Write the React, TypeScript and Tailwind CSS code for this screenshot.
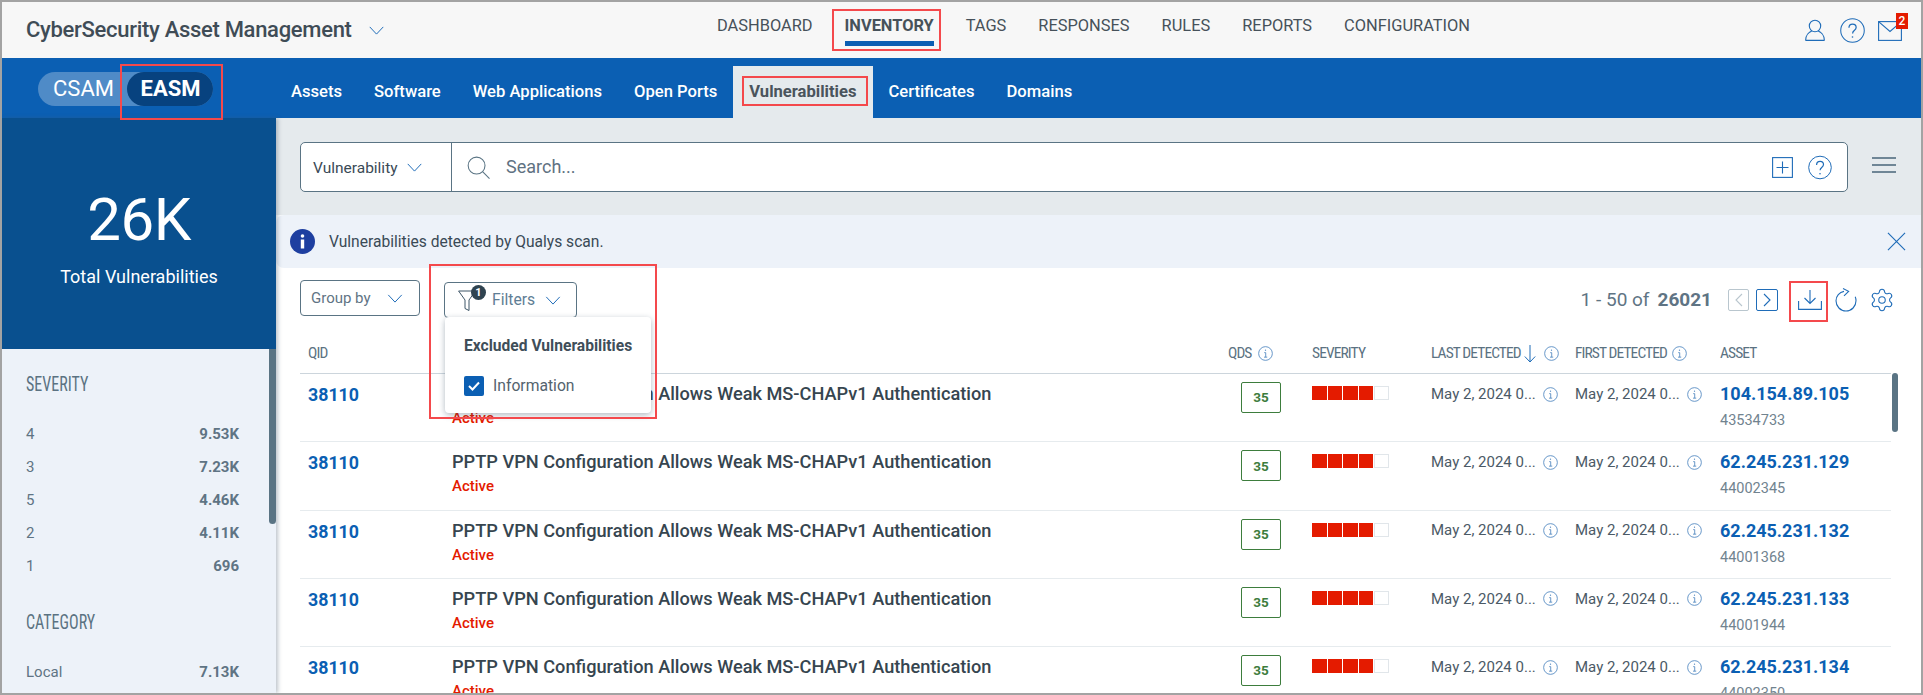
import React from "react";
import { Settings } from "lucide-react";

const BLUE = "#1f6cb8";

function Chevron({ className = "", color = BLUE }: { className?: string; color?: string }) {
  return (
    <svg viewBox="0 0 16 10" className={className} fill="none" stroke={color} strokeWidth="1.1">
      <path d="M0.5 1 L8 9 L15.5 1" />
    </svg>
  );
}

function Help({ className = "" }: { className?: string }) {
  return (
    <svg viewBox="0 0 24 24" className={className} fill="none" stroke={BLUE} strokeWidth="1">
      <circle cx="12" cy="12" r="11.3" />
      <path d="M8.6 9.4c0-2.2 1.6-3.6 3.5-3.6s3.4 1.3 3.4 3.2c0 1.4-.8 2.2-1.8 3-1 .8-1.6 1.4-1.6 2.8" strokeWidth="1.2" />
      <circle cx="12" cy="18.2" r=".8" fill={BLUE} stroke="none" />
    </svg>
  );
}

function Info({ className = "" }: { className?: string }) {
  return (
    <svg viewBox="0 0 14 14" className={className} fill="none" stroke="#4f86c0" strokeWidth=".8">
      <circle cx="7" cy="7" r="6.4" />
      <path d="M5.8 6.2H7.2V10.4M5.6 10.4H8.6" />
      <circle cx="7" cy="3.9" r=".6" fill="#4f86c0" stroke="none" />
    </svg>
  );
}

function Label({ children, className = "" }: { children: React.ReactNode; className?: string }) {
  return <span className={`[font-stretch:75%] font-normal text-[15.5px] tracking-[-0.9px] text-[#5b7282] uppercase whitespace-nowrap ${className}`}>{children}</span>;
}

function SideLabel({ children, className = "" }: { children: React.ReactNode; className?: string }) {
  return <div className={`[font-stretch:75%] text-[20px] leading-[24px] text-[#5b7282] uppercase whitespace-nowrap origin-left scale-x-[.8] ${className}`}>{children}</div>;
}

function Annot({ className }: { className: string }) {
  return <div className={`absolute border-2 border-[#f4494c] pointer-events-none ${className}`} />;
}

function NavItem({ label, active }: { label: string; active?: boolean }) {
  return (
    <div className="relative h-[44px] flex items-center whitespace-nowrap">
      <span className={`text-[16.4px] text-[#46515a] ${active ? "font-bold" : ""}`}>{label}</span>
      {active ? <div className="absolute left-0 right-0 top-[37px] h-[5px] bg-[#0b5fb3]" /> : null}
    </div>
  );
}

function SubTab({ label, active }: { label: string; active?: boolean }) {
  return (
    <div className={`h-[52px] px-4 flex items-center pt-[1px] text-[16.6px] whitespace-nowrap ${active ? "bg-[#e5eaed] text-[#4a545c] font-bold" : "text-white font-medium"}`}>{label}</div>
  );
}

function SideRow({ k, v }: { k: string; v: string }) {
  return (
    <div className="h-[33px] flex items-center justify-between text-[15px] text-[#5f7484]">
      <span>{k}</span>
      <span className="font-bold">{v}</span>
    </div>
  );
}

function SevBars() {
  return (
    <div className="flex gap-[1px] mt-[12px]">
      <div className="w-[14.5px] h-[14px] bg-[#e41b00]" />
      <div className="w-[14.5px] h-[14px] bg-[#e41b00]" />
      <div className="w-[14.5px] h-[14px] bg-[#e41b00]" />
      <div className="w-[14.5px] h-[14px] bg-[#e41b00]" />
      <div className="w-[14.5px] h-[14px] border border-[#e1e6ea] bg-white" />
    </div>
  );
}

function DateCell() {
  return (
    <div className="flex items-center gap-[7px] mt-[10px] h-[20px] text-[15px] text-[#4b5a66] whitespace-nowrap">
      <span>May 2, 2024 0...</span>
      <Info className="w-[15px] h-[15px] shrink-0" />
    </div>
  );
}

function Row({ ip, id }: { ip: string; id: string }) {
  return (
    <div className="h-[68.25px] flex border-b border-[#e6ebee] shrink-0">
      <div className="w-[152px] pl-2 pt-[8px] text-[17.8px] font-bold text-[#0b5fb3]">38110</div>
      <div className="w-[776px] pt-[8px]">
        <div className="text-[18.2px] font-medium text-[#36454f] leading-[24px] whitespace-nowrap">PPTP VPN Configuration Allows Weak MS-CHAPv1 Authentication</div>
        <div className="text-[15px] font-medium text-[#e41b00] leading-[20px] mt-[2px]">Active</div>
      </div>
      <div className="w-[84px] pl-[13px] pt-[8px]">
        <div className="w-[40px] h-[31px] rounded-[2px] border border-[#3d7d3d] flex items-center justify-center text-[13.5px] font-bold text-[#3d7d3d]">35</div>
      </div>
      <div className="w-[119px]"><SevBars /></div>
      <div className="w-[144px]"><DateCell /></div>
      <div className="w-[145px]"><DateCell /></div>
      <div className="flex-1 pt-[8px]">
        <div className="text-[18px] font-bold text-[#0b5fb3] leading-[24px]">{ip}</div>
        <div className="text-[14.5px] text-[#71838f] leading-[20px] mt-[5px]">{id}</div>
      </div>
    </div>
  );
}

export default function App() {
  return (
    <div className="relative w-[1923px] h-[695px] overflow-hidden border-2 border-[#a3a3a3] bg-white flex flex-col font-['Roboto',sans-serif]">
      {/* header */}
      <header className="h-[56px] shrink-0 bg-[#f7f7f7] flex">
        <div className="w-[715px] shrink-0 pl-[24px] flex items-start pt-[13px]">
          <span className="text-[22px] font-medium text-[#3f4c56] tracking-[-0.3px] leading-[30px] whitespace-nowrap">CyberSecurity Asset Management</span>
          <Chevron className="w-[15px] h-[9px] ml-[17px] mt-[11px]" />
        </div>
        <nav className="flex gap-8 h-[44px] pt-[2px]">
          <NavItem label="DASHBOARD" />
          <NavItem label="INVENTORY" active />
          <NavItem label="TAGS" />
          <NavItem label="RESPONSES" />
          <NavItem label="RULES" />
          <NavItem label="REPORTS" />
          <NavItem label="CONFIGURATION" />
        </nav>
        <div className="ml-auto pr-[19px] flex items-start gap-[15px] pt-[16px]">
          <svg viewBox="0 0 20 22" className="w-[20px] h-[22px] mt-[1px]" fill="none" stroke={BLUE} strokeWidth="1.1">
            <circle cx="10" cy="7" r="5.7" />
            <path d="M.6 21.4c0-5.2 3.6-8.4 6.2-9.4M19.4 21.4c0-5.2-3.6-8.4-6.2-9.4M.6 21.4H19.4" />
          </svg>
          <Help className="w-[25px] h-[25px]" />
          <div className="relative w-[24px] h-[20px] ml-[-2px] mt-[3px]">
            <svg viewBox="0 0 24 20" className="w-[24px] h-[20px]" fill="none" stroke={BLUE} strokeWidth="1.1">
              <rect x=".6" y=".6" width="22.8" height="18.8" />
              <path d="M.6 .6 12 10.5 23.4 .6" />
            </svg>
            <div className="absolute left-[18px] top-[-8px] w-[12px] h-[16px] bg-[#e41b00] text-white text-[12px] font-medium leading-[16px] text-center">2</div>
          </div>
        </div>
      </header>

      {/* sub nav */}
      <div className="h-[60px] shrink-0 bg-[#0b5fb3] flex items-end">
        <div className="w-[273px] shrink-0 self-start pl-[36px] pt-[14px]">
          <div className="w-[175px] h-[34px] rounded-full bg-[#4f8bc7] flex items-center">
            <span className="w-[89px] pl-[15px] text-[22px] text-white leading-[34px]">CSAM</span>
            <span className="w-[86px] h-[34px] pl-[1px] rounded-full bg-[#07427f] text-center text-[22px] font-bold text-white leading-[34px]">EASM</span>
          </div>
        </div>
        <SubTab label="Assets" />
        <SubTab label="Software" />
        <SubTab label="Web Applications" />
        <SubTab label="Open Ports" />
        <SubTab label="Vulnerabilities" active />
        <SubTab label="Certificates" />
        <SubTab label="Domains" />
      </div>

      {/* body */}
      <div className="flex flex-1 min-h-0">
        <aside className="relative w-[274px] shrink-0 flex flex-col bg-[#edf2f9] shadow-[2px_0_4px_rgba(70,90,110,0.35)] z-10">
          <div className="h-[231px] shrink-0 bg-[#09508f] text-white flex flex-col items-center pt-[66px]">
            <div className="text-[60px] font-normal leading-[72px] tracking-[-0.5px]">26K</div>
            <div className="text-[18px] mt-[9px] leading-[24px]">Total Vulnerabilities</div>
          </div>
          <div className="flex-1 pl-[24px] pr-[37px] pt-[23px]">
            <SideLabel className="mb-[22px]">Severity</SideLabel>
            <SideRow k="4" v="9.53K" />
            <SideRow k="3" v="7.23K" />
            <SideRow k="5" v="4.46K" />
            <SideRow k="2" v="4.11K" />
            <SideRow k="1" v="696" />
            <SideLabel className="mt-[27px] mb-[22px]">Category</SideLabel>
            <SideRow k="Local" v="7.13K" />
          </div>
          <div className="absolute right-0 top-[231px] w-[7px] h-[175px] rounded-b bg-[#5a7484]" />
        </aside>

        <main className="relative flex-1 min-w-0 flex flex-col bg-white">
          <div className="h-[97px] shrink-0 bg-[#e5eaed] flex items-start pt-[24px] pl-[24px]">
            <div className="w-[1548px] h-[50px] rounded-[5px] bg-white border border-[#5a7484] flex items-center">
              <div className="w-[151px] h-full border-r border-[#5a7484] flex items-center pl-[12px]">
                <span className="text-[15.5px] text-[#3a4a56] pt-[4px]">Vulnerability</span>
                <Chevron className="w-[15px] h-[9px] ml-[9px]" />
              </div>
              <svg viewBox="0 0 24 24" className="w-[23px] h-[23px] ml-[15px]" fill="none" stroke="#5a7484" strokeWidth="1.1">
                <circle cx="10" cy="10" r="8.8" />
                <path d="M16.5 16.5 23.5 23.5" />
              </svg>
              <span className="ml-[16px] text-[18px] text-[#5f7282] pb-[2px]">Search...</span>
              <svg viewBox="0 0 21 21" className="w-[21px] h-[21px] ml-auto mr-[15px]" fill="none" stroke={BLUE} strokeWidth="1.1">
                <rect x=".6" y=".6" width="19.8" height="19.8" />
                <path d="M10.5 4.5V16.5M4.5 10.5H16.5" />
              </svg>
              <Help className="w-[24px] h-[25px] mr-[15px]" />
            </div>
            <div className="ml-[24px] mt-[15px] w-[24px] flex flex-col gap-[5.5px]">
              <div className="h-[1.5px] bg-[#6f8696]" />
              <div className="h-[1.5px] bg-[#6f8696]" />
              <div className="h-[1.5px] bg-[#6f8696]" />
            </div>
          </div>

          <div className="h-[53px] shrink-0 bg-[#edf2f9] rounded-l-[8px] flex items-center pl-[14px] pr-[15px]">
            <svg viewBox="0 0 25 25" className="w-[25px] h-[25px]">
              <circle cx="12.5" cy="12.5" r="12.5" fill="#1e3fa0" />
              <circle cx="12.5" cy="7" r="1.8" fill="#fff" />
              <rect x="10.8" y="10.5" width="3.4" height="9" fill="#fff" />
            </svg>
            <span className="ml-[14px] pt-[2px] text-[15.6px] text-[#3a4a56]">Vulnerabilities detected by Qualys scan.</span>
            <svg viewBox="0 0 20 20" className="w-[19px] h-[19px] ml-auto" fill="none" stroke={BLUE} strokeWidth="1.2">
              <path d="M1 1 19 19M19 1 1 19" />
            </svg>
          </div>

          <div className="h-[72px] shrink-0 flex items-start pl-[24px] pr-[26px]">
            <div className="mt-[12px] w-[120px] h-[36px] rounded-[4px] border border-[#5a7484] flex items-center pl-[10px]">
              <span className="text-[15px] text-[#5f7484]">Group by</span>
              <Chevron className="w-[16px] h-[9px] ml-[16px]" />
            </div>
            <div className="ml-[24px] mt-[14px] w-[133px] h-[36px] rounded-[4px] border border-[#5a7484] flex items-center pl-[13px]">
              <div className="relative w-[18px] h-[23px]">
                <svg viewBox="0 0 18 22" className="w-[18px] h-[23px]" fill="none" stroke="#3d5566" strokeWidth="1">
                  <path d="M.6 1.5H17.4L11 10.5V21L7 19V10.5Z" />
                </svg>
                <div className="absolute left-[13px] top-[-4px] w-[15px] h-[15px] rounded-full bg-[#2f4350] text-white text-[11px] font-bold leading-[15px] text-center">1</div>
              </div>
              <span className="ml-[16px] text-[15.7px] text-[#5f7e95]">Filters</span>
              <Chevron className="w-[16px] h-[9px] ml-[10px]" />
            </div>
            <div className="ml-auto flex items-center mt-[18px]">
              <span className="text-[19px] text-[#5f7484]">1 - 50 of</span>
              <span className="ml-[8px] text-[19px] font-bold text-[#5f7484]">26021</span>
              <div className="ml-[16px] w-[21px] h-[22px] rounded-[2px] border border-[#b9c6ce] flex items-center justify-center">
                <svg viewBox="0 0 8 14" className="w-[8px] h-[14px]" fill="none" stroke="#b9c6ce" strokeWidth="1.1"><path d="M7 1 1 7 7 13" /></svg>
              </div>
              <div className="ml-[7px] w-[22px] h-[22px] rounded-[2px] border border-[#1f6cb8] flex items-center justify-center">
                <svg viewBox="0 0 8 14" className="w-[8px] h-[14px]" fill="none" stroke={BLUE} strokeWidth="1.1"><path d="M1 1 7 7 1 13" /></svg>
              </div>
              <svg viewBox="0 0 24 20" className="ml-[20px] w-[24px] h-[20px]" fill="none" stroke={BLUE} strokeWidth="1.1">
                <path d="M12 0V13M6.5 8 12 13.5 17.5 8" />
                <path d="M.6 11V19.4H23.4V11" />
              </svg>
              <svg viewBox="0 0 22 24" className="ml-[13px] w-[22px] h-[24px]" fill="none" stroke={BLUE} strokeWidth="1.1">
                <path d="M9 3.4C4.4 4.2 1 8 1 12.8 1 18.4 5.4 23 11 23S21 18.4 21 12.8C21 11.4 20.7 10 20.2 8.8" />
                <path d="M8 .6 13.6 3.3 9 7.8" />
              </svg>
              <Settings className="ml-[12px] w-[26px] h-[26px]" stroke={BLUE} strokeWidth={1} />
            </div>
          </div>

          <div className="w-[1591px] ml-[24px] flex flex-col min-h-0">
            <div className="h-[34px] pb-[6px] shrink-0 flex border-b border-[#ccd5dc] items-center">
              <div className="w-[152px] pl-2"><Label>QID</Label></div>
              <div className="w-[776px]" />
              <div className="w-[84px] flex items-center gap-[6px]"><Label>QDS</Label><Info className="w-[15px] h-[15px]" /></div>
              <div className="w-[119px]"><Label>Severity</Label></div>
              <div className="w-[144px] flex items-center">
                <Label>Last Detected</Label>
                <svg viewBox="0 0 12 18" className="w-[12px] h-[18px] ml-[3px] shrink-0" fill="none" stroke={BLUE} strokeWidth="1"><path d="M6 0V17M.8 11.5 6 17 11.2 11.5" /></svg>
                <Info className="w-[15px] h-[15px] ml-[8px] shrink-0" />
              </div>
              <div className="w-[145px] flex items-center gap-[5px]"><Label>First Detected</Label><Info className="w-[15px] h-[15px] shrink-0" /></div>
              <div className="flex-1"><Label>Asset</Label></div>
            </div>
            <Row ip="104.154.89.105" id="43534733" />
            <Row ip="62.245.231.129" id="44002345" />
            <Row ip="62.245.231.132" id="44001368" />
            <Row ip="62.245.231.133" id="44001944" />
            <Row ip="62.245.231.134" id="44002350" />
          </div>
        </main>
      </div>

      {/* scrollbar over table */}
      <div className="absolute left-[1890px] top-[371px] w-[6px] h-[59px] rounded bg-[#5a7484]" />

      {/* filter dropdown */}
      <div className="absolute left-[443px] top-[315px] w-[206px] h-[96px] rounded-[4px] bg-white shadow-[0_2px_6px_rgba(60,80,100,0.4)] z-20 pl-[19px] pt-[19px]">
        <div className="text-[15.6px] font-bold text-[#3f4e59] leading-[20px] whitespace-nowrap">Excluded Vulnerabilities</div>
        <div className="flex items-center mt-[18px]">
          <div className="w-[20px] h-[20px] rounded-[2px] bg-[#0b5fb3] flex items-center justify-center">
            <svg viewBox="0 0 12 10" className="w-[12px] h-[10px]" fill="none" stroke="#fff" strokeWidth="2"><path d="M1 5 4.5 8.5 11 1.5" /></svg>
          </div>
          <span className="ml-[9px] text-[15.7px] text-[#54636e]">Information</span>
        </div>
      </div>

      {/* annotation boxes */}
      <Annot className="left-[118px] top-[62px] w-[103px] h-[56px] z-30" />
      <Annot className="left-[830px] top-[7px] w-[109px] h-[42px] z-30" />
      <Annot className="left-[740px] top-[74px] w-[126px] h-[30px] z-30" />
      <Annot className="left-[427px] top-[262px] w-[228px] h-[155px] z-30" />
      <Annot className="left-[1787px] top-[279px] w-[39px] h-[41px] z-30" />
    </div>
  );
}
